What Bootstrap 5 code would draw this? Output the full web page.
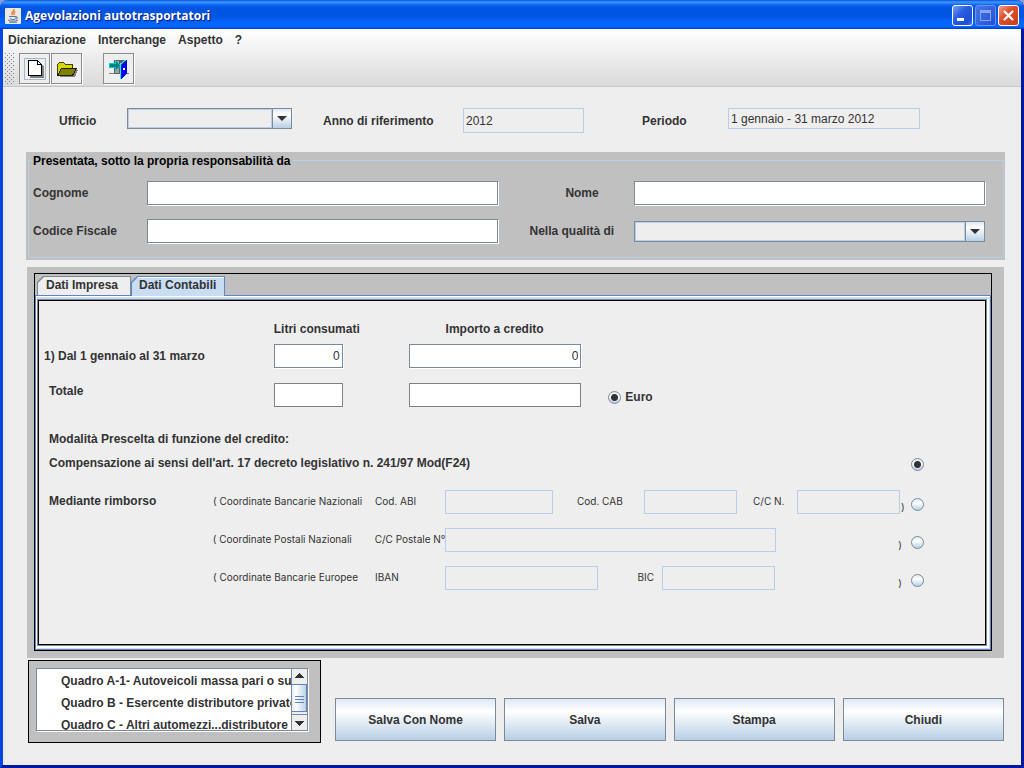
<!DOCTYPE html>
<html lang="it">
<head>
<meta charset="utf-8">
<meta name="viewport" content="width=device-width, initial-scale=1">
<title>Agevolazioni autotrasportatori</title>
<link href="https://cdn.jsdelivr.net/npm/bootstrap@5.3.0/dist/css/bootstrap.min.css" rel="stylesheet">
<style>
:root{--edge:#7a8a99;--soft:#b8cfe5;--face:#eee;--panel:#c0c0c0;--ink:#333}
body{font:bold 12px/16px "Liberation Sans",Arial,sans-serif;color:var(--ink);background:#8a9bd8}
input,select,button{font:inherit;color:inherit;border-radius:0;min-width:0}
.window{min-height:100vh;background:var(--face);border:solid;border-width:0 3px 3px;border-color:#0a2fd8 #0018a8 #0018a8 #0846e4;border-radius:8px 8px 0 0}
.titlebar{height:29px;margin:0 -3px;padding:2px 5px 0;color:#fff;text-shadow:1px 1px 1px #0a1883;border-radius:8px 8px 0 0;
 background:linear-gradient(#0b4fd4 0,#3d95ff 2px,#2b8bff 3px,#0a62ee 5px,#0255e2 8px,#0054e3 16px,#0260f4 20px,#0567ff 25px,#0463fb 27px,#0048d8 28px,#003dc9)}
.titlebar h1{font:bold 12px/26px "Open Sans","Noto Sans",sans-serif}
.captions{gap:2px}
.caption-btn{width:21px;height:21px;border:1px solid #fff;border-radius:3px;padding:0;background:linear-gradient(135deg,#7ba0f4,#2a5de0 40%,#1d4fd8 80%,#3a78f0)}
.caption-btn:disabled{border-color:#6f92ee;background:linear-gradient(135deg,#4878e8,#1f50d8)}
.caption-btn.quit{background:linear-gradient(135deg,#f0a088,#e0502c 40%,#c83c14)}
.caption-btn svg{display:block}
.chrome{background:linear-gradient(#fff,#dadada);border-bottom:1px solid #c8c8c8;margin-bottom:1px}
.menus{height:22px;padding-left:5px;gap:12px}
.menus a{color:inherit;text-decoration:none}
.tools{padding:2px 2px;height:35px}
.grip{width:10px;height:32px;margin-right:4px;background:url("data:image/svg+xml,%3Csvg xmlns='http://www.w3.org/2000/svg' width='4' height='4'%3E%3Cpath d='M0 0h1v1H0zM2 2h1v1H2z' fill='%236f86a3'/%3E%3C/svg%3E")}
.tool{width:31px;height:31px;padding:0;border:1px solid #8c8c8c;background:#eee;box-shadow:1px 1px #fff;margin-right:1px}
.tool svg{display:block}
.tool.apart{margin-left:20px}
.field{height:24px;border:1px solid var(--edge);background:#fff;box-shadow:1px 1px #fff;padding:0 2px;width:100%;font-weight:normal}
.field.flat{border-color:var(--soft);background:var(--face);box-shadow:none}
.field.plain{border-color:gray;box-shadow:none}
.field.low{height:21px}
.pick{appearance:none;height:21px;width:100%;border:1px solid var(--edge);background:
 url("data:image/svg+xml,%3Csvg xmlns='http://www.w3.org/2000/svg' width='10' height='5'%3E%3Cpath d='M0 0h10L5 5z' fill='%23333'/%3E%3C/svg%3E") right 4px center no-repeat,
 linear-gradient(var(--edge),var(--edge)) right 18px top/1px 100% no-repeat,
 linear-gradient(#dde8f3,#fff 30%,#b8cfe5) right top/18px 100% no-repeat,
 linear-gradient(#eee,#eee) 1px 1px/calc(100% - 21px) calc(100% - 2px) no-repeat var(--soft)}
.g{display:grid}
.g-top{grid-template-columns:68fr 165fr 171fr 121fr 144fr 192fr;padding:20px 101px 19px 56px}
.g-top label{line-height:26px;height:25px}
.g-top .field{height:25px}
.g-top .low{height:21px}
.in-mid{padding-left:31px}
.in-wide{padding-left:58px}
.declarant{background:var(--panel);margin:0 16px 7px 23px;padding:1px 1px 2px 2px}
.declarant fieldset{border:1px solid var(--soft);padding:0 18px 14px 4px}
.declarant legend{float:none;width:auto;margin:0 0 13px -1px;padding:0 3px 0 1px;font:inherit;line-height:16px;height:15px;color:#000}
.g-person{grid-template-columns:114fr 351fr 135fr 351fr;row-gap:14px;align-items:center}
.workarea{background:var(--panel);margin:0 17px 0 24px;padding:6px 12px 7px 7px}
.tabbox{border:1px solid #000}
.tabs{padding:2px 2px 0}
.tab{position:relative;z-index:0;border:0;padding:0 13px 0 9px;height:19px;line-height:19px;background:var(--edge);clip-path:polygon(6px 0,100% 0,100% 100%,0 100%,0 6px);white-space:nowrap}
.tab::before{content:"";position:absolute;z-index:-1;inset:1px 1px 0;background:#eee;clip-path:polygon(6px 0,100% 0,100% 100%,0 100%,0 6px)}
.tab.on{background:#6382bf;margin-bottom:-1px;height:20px;padding:0 9px 1px 8px;z-index:1}
.tab.on::before{background:#c8ddf2;box-shadow:inset 0 1px #fff}
.tabpane{border:1px solid #6382bf;padding:4px;padding-left:2px;background:#c8ddf2;box-shadow:inset 1px 1px #fff}
.sheet{background:var(--face);border:1px solid #000;box-shadow:0 0 0 1px var(--edge),1px 1px 0 2px #fff;padding:20px 61px 0 0;min-height:340px}
.g-sum{grid-template-columns:235fr 135fr 200fr 316fr}
.g-sum .c2{padding-right:66px}
.g-sum .c3{padding-right:27px}
.g-sum .head3{padding-left:37px}
.gap-a{margin-top:7px}
.gap-b{margin-top:15px}
.edge-a{padding-left:5px}
.edge-b{padding-left:10px}
.money{font-weight:normal;text-align:right}
.euro{height:28px;margin-bottom:-4px}
.mode{margin:8px 0 19px}
.g-pay{padding-left:10px;height:38px;align-items:start}
.g-pay label,.g-pay span{line-height:22px;white-space:nowrap}
.g-pay .note{font:normal 10px/22px Inter,"Liberation Sans",sans-serif}
.r1{grid-template-columns:164fr 162fr 70fr 108fr 91fr 93fr 60fr 103fr 10fr 14px}
.r2{grid-template-columns:164fr 162fr 70fr 331fr 134fr 14px}
.r3{grid-template-columns:164fr 162fr 70fr 153fr 64fr 113fr 135fr 14px}
.g-pay .close-p{padding:6px 8px 0 1px}
.dot{appearance:none;width:13px;height:13px;border:1px solid var(--edge);border-radius:50%;background:linear-gradient(#dde8f3,#fff 35%,#b8cfe5);margin:0;flex:none}
.dot:checked{background:radial-gradient(circle,#333 0 3px,transparent 4px),linear-gradient(#dde8f3,#fff 35%,#b8cfe5)}
.g-pay .dot{margin:8px 0 0 1px}
.g-foot{grid-template-columns:minmax(0,293fr) minmax(0,669fr);column-gap:14px;padding:2px 17px 22px 25px}
.listbox{border:1px solid #000;background:var(--panel);padding:7px 12px 11px 7px;height:83px}
.quadri{border:1px solid var(--edge);background:#fff;box-shadow:1px 1px #fff;height:63px;overflow:hidden}
.quadri ul{margin:0;padding:1px 0 0 24px;list-style:none;overflow:hidden;min-width:0}
.quadri li{line-height:22px;white-space:nowrap}
.scroll{width:16px;border-left:1px solid var(--edge);background:#eee}
.scroll svg{display:block}
.actions{padding-top:38px;gap:8px}
.act{flex:1 1 0;height:43px;border:1px solid var(--edge);background:linear-gradient(#dde8f3,#fff 30%,#b8cfe5)}
</style>
</head>
<body>
<div class="window d-flex flex-column">
 <header class="titlebar d-flex align-items-center">
  <svg width="16" height="16" viewBox="0 0 16 16" class="flex-shrink-0 me-1" aria-hidden="true"><rect width="16" height="16" rx="1" fill="#ece9e4"/><path d="M9 1c1 2-4 3-1.500 6M10.500 3.500c-2 1-2 2-1 3.500" stroke="#e87722" stroke-width="1.300" fill="none"/><path d="M4 8.500h7v1.500c0 2-6 2-6 0M11 9c2-.5 2 1.500 0 2M3 12c2 1.500 8 1.500 10 0M4 14.200h8" stroke="#55799b" fill="none"/></svg>
  <h1 class="m-0 flex-grow-1">Agevolazioni autotrasportatori</h1>
  <div class="captions d-flex">
   <button class="caption-btn" aria-label="Riduci"><svg width="19" height="19"><path d="M4 12h7v3H4z" fill="#fff"/></svg></button>
   <button class="caption-btn" aria-label="Ingrandisci" disabled><svg width="19" height="19"><path d="M4.500 5v9.500h10V5" stroke="#8ea4ee" fill="none"/><path d="M4 4h11v3H4z" fill="#8ea4ee"/></svg></button>
   <button class="caption-btn quit" aria-label="Chiudi finestra"><svg width="19" height="19"><path d="M5 5l9 9M14 5l-9 9" stroke="#fff" stroke-width="2.200"/></svg></button>
  </div>
 </header>
 <div class="chrome">
  <nav class="menus d-flex align-items-center"><a href="#">Dichiarazione</a><a href="#">Interchange</a><a href="#">Aspetto</a><a href="#">?</a></nav>
  <div class="tools d-flex">
   <span class="grip"></span>
   <button class="tool" aria-label="Nuovo"><svg width="29" height="29" shape-rendering="crispEdges"><path d="M4.500 4.500h21v21h-21z" fill="none" stroke="#a3b8cc"/><path d="M10 8h9l5 5v11H10z" fill="#808080"/><path d="M8.500 6.500h9l4 4v11h-13z" fill="#fff" stroke="#000"/><path d="M17.500 6.500v4h4" fill="none" stroke="#000"/></svg></button>
   <button class="tool" aria-label="Apri"><svg width="29" height="29" shape-rendering="crispEdges"><path d="M8 23l4-8h12l2 1-3 7z" fill="#808080"/><path d="M5.500 21.500v-11l2-2h4l2 2h7v4" fill="#d8d800" stroke="#404000"/><path d="M5.500 21.500l4-7h15l-4 7z" fill="#808000" stroke="#202000"/></svg></button>
   <button class="tool apart" aria-label="Esci"><svg width="29" height="29" shape-rendering="crispEdges"><path d="M5 19.500h20" stroke="#808080"/><path d="M10 6h12v14H10z" fill="#606060"/><path d="M11 7h4v12h-4z" fill="#a0a0a0"/><path d="M5.500 9.500h6v-3l5 5-5 5v-3h-6z" fill="#008080" stroke="#00c8c8"/><path d="M17 11l6-5v13l-6 6z" fill="#0000f0"/><path d="M16.500 25V10l5-4" fill="none" stroke="#00ffff"/><path d="M19 14h2v2h-2z" fill="#fff"/></svg></button>
  </div>
 </div>
 <main class="flex-grow-1 d-flex flex-column">
  <div class="g g-top">
   <label for="uff">Ufficio</label><select id="uff" class="pick"><option></option></select>
   <label for="anno" class="in-mid">Anno di riferimento</label><input id="anno" class="field flat" value="2012" readonly>
   <label for="per" class="in-wide">Periodo</label><input id="per" class="field flat low" value="1 gennaio - 31 marzo 2012" readonly>
  </div>
  <div class="declarant">
   <fieldset>
    <legend>Presentata, sotto la propria responsabilità da</legend>
    <div class="g g-person">
     <label for="cog">Cognome</label><input id="cog" class="field">
     <label for="nom" class="text-center ps-4 ms-2">Nome</label><input id="nom" class="field">
     <label for="cf">Codice Fiscale</label><input id="cf" class="field">
     <label for="qual" class="in-mid">Nella qualità di</label><select id="qual" class="pick"><option></option></select>
    </div>
   </fieldset>
  </div>
  <section class="workarea flex-grow-1 d-flex flex-column">
   <div class="tabbox flex-grow-1 d-flex flex-column">
    <div class="tabs d-flex" role="tablist">
     <button class="tab" role="tab">Dati Impresa</button><button class="tab on" role="tab" aria-selected="true">Dati Contabili</button>
    </div>
    <div class="tabpane flex-grow-1 d-flex flex-column">
     <div class="sheet flex-grow-1">
      <div class="g g-sum">
       <span></span><span>Litri consumati</span><span class="head3">Importo a credito</span><span></span>
      </div>
      <div class="g g-sum gap-a align-items-center">
       <label for="litri" class="edge-a">1) Dal 1 gennaio al 31 marzo</label>
       <div class="c2"><input id="litri" class="field money" value="0"></div>
       <div class="c3"><input id="credito" class="field money" value="0" aria-label="Importo a credito"></div>
      </div>
      <div class="g g-sum gap-b">
       <label for="tot" class="edge-b">Totale</label>
       <div class="c2"><input id="tot" class="field plain"></div>
       <div class="c3"><input class="field plain" aria-label="Totale importo"></div>
       <div class="euro d-flex align-items-center gap-1"><input type="radio" class="dot" id="euro" name="valuta" checked><label for="euro">Euro</label></div>
      </div>
      <p class="mb-0 mt-4 edge-b">Modalità Prescelta di funzione del credito:</p>
      <div class="mode d-flex justify-content-between edge-b"><label for="m0">Compensazione ai sensi dell'art. 17 decreto legislativo n. 241/97 Mod(F24)</label><input type="radio" class="dot align-self-end" id="m0" name="modo" checked></div>
      <div class="g g-pay r1">
       <label for="m1">Mediante rimborso</label><span class="note">( Coordinate Bancarie Nazionali</span><label for="abi" class="note">Cod. ABI</label><input id="abi" class="field flat">
       <label for="cab" class="note ps-4">Cod. CAB</label><input id="cab" class="field flat"><label for="cc" class="note ps-3">C/C N.</label><input id="cc" class="field flat">
       <span class="note close-p pe-0">)</span><input type="radio" class="dot" id="m1" name="modo">
      </div>
      <div class="g g-pay r2">
       <span></span><label for="m2" class="note">( Coordinate Postali Nazionali</label><label for="ccp" class="note">C/C Postale N°</label><input id="ccp" class="field flat">
       <span class="note close-p text-end">)</span><input type="radio" class="dot" id="m2" name="modo">
      </div>
      <div class="g g-pay r3">
       <span></span><label for="m3" class="note">( Coordinate Bancarie Europee</label><label for="iban" class="note">IBAN</label><input id="iban" class="field flat">
       <label for="bic" class="note text-end pe-2">BIC</label><input id="bic" class="field flat"><span class="note close-p text-end">)</span><input type="radio" class="dot" id="m3" name="modo">
      </div>
     </div>
    </div>
   </div>
  </section>
  <footer class="g g-foot">
   <div class="listbox">
    <div class="quadri d-flex">
     <ul class="flex-grow-1"><li>Quadro A-1- Autoveicoli massa pari o superiore</li><li>Quadro B - Esercente distributore privato</li><li>Quadro C - Altri automezzi...distributore privato</li></ul>
     <div class="scroll flex-shrink-0" aria-hidden="true"><svg width="15" height="61" shape-rendering="crispEdges"><path d="M3 9l4.500-5L12 9zM3 52h9l-4.500 5z" fill="#333"/><defs><linearGradient id="th"><stop stop-color="#dde8f3"/><stop offset=".3" stop-color="#fff"/><stop offset="1" stop-color="#b8cfe5"/></linearGradient></defs><path d="M-.5 15.500h15v27h-15z" fill="url(#th)" stroke="#6382bf"/><path d="M3 27.500h9M3 30.500h9M3 33.500h9" stroke="#6382bf"/><path d="M0 45.500h15" stroke="#7a8a99"/></svg></div>
    </div>
   </div>
   <div class="actions d-flex">
    <button class="act">Salva Con Nome</button><button class="act">Salva</button><button class="act">Stampa</button><button class="act">Chiudi</button>
   </div>
  </footer>
 </main>
</div>
<script src="https://cdn.jsdelivr.net/npm/bootstrap@5.3.0/dist/js/bootstrap.bundle.min.js"></script>
</body>
</html>
